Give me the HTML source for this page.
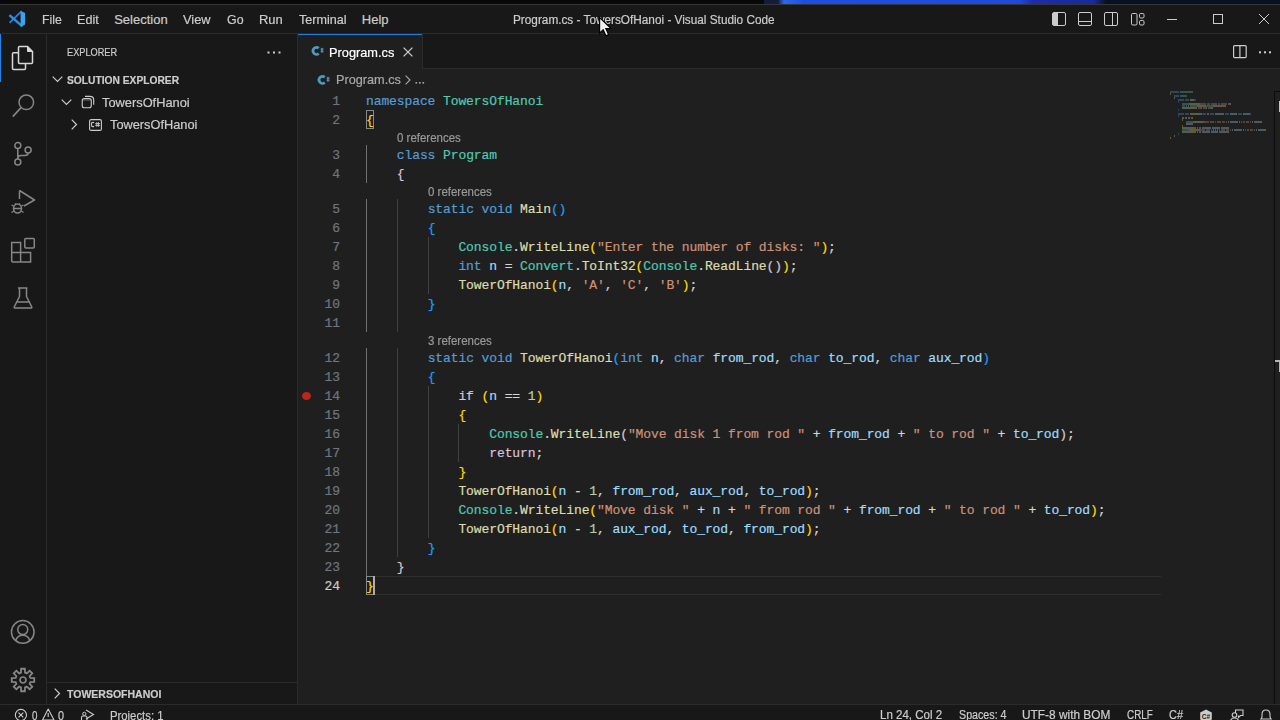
<!DOCTYPE html>
<html><head><meta charset="utf-8">
<style>
*{box-sizing:border-box}
html,body{margin:0;padding:0}
body{width:1280px;height:720px;overflow:hidden;position:relative;background:#181818;font-family:"Liberation Sans",sans-serif;color:#cccccc;-webkit-text-stroke:0.2px currentColor}
.a{position:absolute}
.tx{position:absolute;white-space:pre;line-height:20px;transform-origin:0 0}
.ln{position:absolute;left:300px;width:40px;text-align:right;font-family:"Liberation Mono",monospace;font-size:13px;color:#6e7681;line-height:19px}
.code{position:absolute;left:366px;font-family:"Liberation Mono",monospace;font-size:13.0px;letter-spacing:-0.100px;line-height:19px;white-space:pre;color:#d4d4d4}
.cl{position:absolute;font-size:12px;color:#999999;line-height:20px;white-space:pre;transform-origin:0 0;transform:scaleX(0.957)}
.k{color:#569cd6}.c{color:#dcc0dc}.t{color:#4ec9b0}.f{color:#dcdcaa}.v{color:#9cdcfe}.s{color:#ce9178}.n{color:#b5cea8}
.b1{color:#ffd700}.b2{color:#d8c4d8}.b3{color:#179fff}
.g{position:absolute;width:1px;background:#404040}
.ga{background:#707070}
svg{position:absolute;overflow:visible}
</style></head><body>
<!-- desktop strip -->
<div class="a" style="left:0;top:0;width:1280px;height:4px;background:#080808"></div>
<div class="a" style="left:764px;top:0;width:516px;height:4px;background:linear-gradient(90deg,#161d3c 0px,#161d3c 14px,#2a6ae8 20px,#1d4fdf 40px,#1f4ad8 256px,#1b2ea8 268px,#1a2a9a 330px,#07111f 342px,#07111f 516px)"></div>
<!-- window top border -->
<div class="a" style="left:0;top:4px;width:1280px;height:1px;background:#363636"></div>
<!-- title bar border -->
<div class="a" style="left:0;top:33px;width:1280px;height:1px;background:#2b2b2b"></div>

<!-- VS Code logo -->
<svg style="left:0;top:0" width="30" height="30" viewBox="0 0 30 30">
<path d="M10.2 22.1 L21 11.8" stroke="#2a7fd6" stroke-width="1.9" stroke-linecap="square"/>
<path d="M10.3 15.9 L21.5 25.6" stroke="#2b8fe6" stroke-width="2.5" stroke-linecap="square"/>
<path d="M20.6 10.9 L25.1 13.1 V24.6 L20.6 26.7 Z" fill="#3aa3f2"/>
</svg>
<div class="tx" style="left:41.7px;top:10.1px;font-size:13px;transform:scaleX(0.945)">File</div>
<div class="tx" style="left:76.9px;top:10.1px;font-size:13px;transform:scaleX(0.968)">Edit</div>
<div class="tx" style="left:114.2px;top:10.1px;font-size:13px">Selection</div>
<div class="tx" style="left:183.4px;top:10.1px;font-size:13px;transform:scaleX(0.986)">View</div>
<div class="tx" style="left:227px;top:10.1px;font-size:13px;transform:scaleX(0.953)">Go</div>
<div class="tx" style="left:258.7px;top:10.1px;font-size:13px;transform:scaleX(0.995)">Run</div>
<div class="tx" style="left:298.5px;top:10.1px;font-size:13px;transform:scaleX(0.967)">Terminal</div>
<div class="tx" style="left:361.8px;top:10.1px;font-size:13px">Help</div>
<div class="tx" style="left:512.7px;top:9.8px;font-size:12.5px;transform:scaleX(0.943)">Program.cs - TowersOfHanoi - Visual Studio Code</div>
<!-- mouse cursor -->
<svg style="left:599.2px;top:17.4px" width="15" height="20.7" viewBox="0 0 13 18">
<path d="M0.5 0.5 L0.5 14 L3.6 11 L6 16.3 L8.3 15.3 L5.9 10.1 L10.5 10 Z" fill="#f0f0f0" stroke="#000" stroke-width="1"/>
</svg>

<!-- layout icons -->
<svg style="left:1052px;top:12px" width="14" height="14" viewBox="0 0 14 14">
<rect x="0.5" y="0.5" width="13" height="13" rx="1.5" fill="none" stroke="#cccccc" stroke-width="1"/>
<rect x="1" y="1" width="5" height="12" fill="#cccccc"/>
</svg>
<svg style="left:1078px;top:12px" width="14" height="14" viewBox="0 0 14 14">
<rect x="0.5" y="0.5" width="13" height="13" rx="1.5" fill="none" stroke="#cccccc" stroke-width="1"/>
<line x1="0.5" y1="9.5" x2="13.5" y2="9.5" stroke="#cccccc" stroke-width="1"/>
</svg>
<svg style="left:1104px;top:12px" width="14" height="14" viewBox="0 0 14 14">
<rect x="0.5" y="0.5" width="13" height="13" rx="1.5" fill="none" stroke="#cccccc" stroke-width="1"/>
<line x1="8.5" y1="0.5" x2="8.5" y2="13.5" stroke="#cccccc" stroke-width="1"/>
</svg>
<svg style="left:1131px;top:12px" width="14" height="14" viewBox="0 0 14 14">
<rect x="0.5" y="1.5" width="5.5" height="11.5" rx="1.2" fill="none" stroke="#cccccc" stroke-width="1"/>
<rect x="8.5" y="1.5" width="4.5" height="4.5" rx="1.2" fill="none" stroke="#cccccc" stroke-width="1"/>
<rect x="8.5" y="8.5" width="4.5" height="4.5" rx="1.2" fill="none" stroke="#cccccc" stroke-width="1"/>
</svg>
<!-- window controls -->
<div class="a" style="left:1167px;top:19px;width:10px;height:1px;background:#cccccc"></div>
<div class="a" style="left:1213px;top:14px;width:10px;height:10px;border:1px solid #cccccc"></div>
<svg style="left:1258px;top:13px" width="12" height="12" viewBox="0 0 12 12">
<path d="M1 1 L11 11 M11 1 L1 11" stroke="#cccccc" stroke-width="1"/>
</svg>

<!-- activity bar -->
<div class="a" style="left:46px;top:34px;width:1px;height:670px;background:#2b2b2b"></div>
<div class="a" style="left:0;top:34px;width:1px;height:48px;background:#1a86f0"></div>
<svg style="left:11px;top:45px" width="24" height="26" viewBox="0 0 24 26">
<path d="M7.5 7.7 H2.5 Q1.5 7.7 1.5 8.7 V23.5 Q1.5 24.5 2.5 24.5 H13.5 Q14.5 24.5 14.5 23.5 V18.5" fill="none" stroke="#d7d7d7" stroke-width="1.5"/>
<path d="M8.5 1.5 H16.5 L21.5 6.5 V17.5 Q21.5 18.5 20.5 18.5 H8.5 Q7.5 18.5 7.5 17.5 V2.5 Q7.5 1.5 8.5 1.5 Z" fill="none" stroke="#d7d7d7" stroke-width="1.5"/>
<path d="M16.5 1.5 V6.5 H21.5 Z" fill="#d7d7d7" stroke="#d7d7d7" stroke-width="1"/>
</svg>
<svg style="left:11px;top:93px" width="25" height="26" viewBox="0 0 25 26">
<circle cx="15.3" cy="9.3" r="7.3" fill="none" stroke="#868686" stroke-width="1.5"/>
<path d="M10 14.6 L1.8 23.6" stroke="#868686" stroke-width="1.6"/>
</svg>
<svg style="left:11px;top:139px" width="24" height="28" viewBox="0 0 24 28">
<circle cx="6.8" cy="6.6" r="3" fill="none" stroke="#868686" stroke-width="1.5"/>
<circle cx="17.1" cy="11" r="3" fill="none" stroke="#868686" stroke-width="1.5"/>
<circle cx="6.8" cy="22.9" r="3" fill="none" stroke="#868686" stroke-width="1.5"/>
<path d="M6.8 9.6 V19.9 M17.1 14 Q17.1 16.5 14 16.5 H10 Q6.8 16.5 6.8 19" fill="none" stroke="#868686" stroke-width="1.5"/>
</svg>
<svg style="left:10px;top:189px" width="26" height="26" viewBox="0 0 26 26">
<path d="M9.5 1.5 L24.5 11 L14 17" fill="none" stroke="#868686" stroke-width="1.5" stroke-linejoin="round"/>
<path d="M9.5 1.5 V10" fill="none" stroke="#868686" stroke-width="1.5"/>
<ellipse cx="7.5" cy="19.5" rx="4" ry="4.5" fill="none" stroke="#868686" stroke-width="1.5"/>
<path d="M3.5 19.5 H11.5 M1.5 16 L3.5 17 M13.5 16 L11.5 17 M1.5 23.5 L3.8 22 M13.5 23.5 L11.2 22 M5 14.5 L6 15.5 M10 14.5 L9 15.5" stroke="#868686" stroke-width="1.3"/>
</svg>
<svg style="left:10px;top:237px" width="26" height="26" viewBox="0 0 26 26">
<path d="M1.7 5.5 H10.6 V15.5 H20.6 V24.9 H2.7 Q1.7 24.9 1.7 23.9 Z M1.7 15.5 H10.6 V24.9" fill="none" stroke="#868686" stroke-width="1.5"/>
<rect x="14.8" y="1.5" width="9.5" height="9.5" rx="1" fill="none" stroke="#868686" stroke-width="1.5"/>
</svg>
<svg style="left:12px;top:286px" width="22" height="24" viewBox="0 0 22 24">
<path d="M6 2 H15.5 M7.5 2 V10.5 L2.2 21 Q2 22 3 22 H19 Q20 22 19.8 21 L14.5 10.5 V2 M4.5 16 H17.5" fill="none" stroke="#868686" stroke-width="1.5" stroke-linejoin="round"/>
</svg>
<svg style="left:10px;top:619px" width="26" height="26" viewBox="0 0 26 26">
<circle cx="12.75" cy="12.9" r="11.3" fill="none" stroke="#868686" stroke-width="1.5"/>
<circle cx="12.75" cy="10.6" r="5" fill="none" stroke="#868686" stroke-width="1.5"/>
<path d="M5.6 21.4 Q7.5 16.2 12.75 16.2 Q18 16.2 19.9 21.4" fill="none" stroke="#868686" stroke-width="1.5"/>
</svg>
<svg style="left:10px;top:667px" width="26" height="26" viewBox="-13 -13 26 26">
<path d="M-2.03 -7.32 L-1.87 -11.25 L1.87 -11.25 L2.03 -7.32 L3.75 -6.61 L6.63 -9.28 L9.28 -6.63 L6.61 -3.75 L7.32 -2.03 L11.25 -1.87 L11.25 1.87 L7.32 2.03 L6.61 3.75 L9.28 6.63 L6.63 9.28 L3.75 6.61 L2.03 7.32 L1.87 11.25 L-1.87 11.25 L-2.03 7.32 L-3.75 6.61 L-6.63 9.28 L-9.28 6.63 L-6.61 3.75 L-7.32 2.03 L-11.25 1.87 L-11.25 -1.87 L-7.32 -2.03 L-6.61 -3.75 L-9.28 -6.63 L-6.63 -9.28 L-3.75 -6.61 Z" fill="none" stroke="#868686" stroke-width="1.8" stroke-linejoin="miter"/>
<circle cx="0" cy="0" r="3" fill="none" stroke="#868686" stroke-width="1.7"/>
</svg>

<!-- sidebar -->
<div class="a" style="left:297px;top:34px;width:1px;height:670px;background:#2b2b2b"></div>
<div class="tx" style="left:66.8px;top:41.7px;font-size:11px;transform:scaleX(0.836)">EXPLORER</div>
<svg style="left:267px;top:51px" width="14" height="3" viewBox="0 0 14 3">
<rect x="0.5" y="0.5" width="2" height="2" fill="#cccccc"/><rect x="6" y="0.5" width="2" height="2" fill="#cccccc"/><rect x="11.5" y="0.5" width="2" height="2" fill="#cccccc"/>
</svg>
<svg style="left:52px;top:76px" width="11" height="7" viewBox="0 0 11 7">
<path d="M0.7 0.7 L5.5 5.5 L10.3 0.7" fill="none" stroke="#cccccc" stroke-width="1.2"/>
</svg>
<div class="tx" style="left:67.1px;top:69.8px;font-size:11px;font-weight:bold;transform:scaleX(0.931)">SOLUTION EXPLORER</div>
<svg style="left:61px;top:99px" width="11" height="7" viewBox="0 0 11 7">
<path d="M0.7 0.7 L5.5 5.5 L10.3 0.7" fill="none" stroke="#cccccc" stroke-width="1.2"/>
</svg>
<svg style="left:81px;top:95px" width="14" height="14" viewBox="0 0 14 14">
<rect x="1.25" y="3.45" width="9" height="9.3" rx="2" fill="none" stroke="#cccccc" stroke-width="1.1"/>
<path d="M1.6 4.9 H9.9" stroke="#cccccc" stroke-width="0.6"/>
<path d="M4 1.4 H9 Q12.7 1.4 12.7 5 V9.8" fill="none" stroke="#cccccc" stroke-width="1.1"/>
</svg>
<div class="tx" style="left:102.2px;top:92.9px;font-size:13px;transform:scaleX(0.987)">TowersOfHanoi</div>
<svg style="left:71px;top:119px" width="7" height="11" viewBox="0 0 7 11">
<path d="M0.7 0.7 L5.5 5.5 L0.7 10.3" fill="none" stroke="#cccccc" stroke-width="1.2"/>
</svg>
<svg style="left:89px;top:119px" width="13" height="12" viewBox="0 0 13 12">
<rect x="0.6" y="0.6" width="11.8" height="10.8" rx="1.5" fill="none" stroke="#cccccc" stroke-width="1.1"/>
<path d="M5 3.9 Q4.6 3.3 3.7 3.3 Q2.5 3.3 2.5 5.5 Q2.5 7.7 3.7 7.7 Q4.6 7.7 5 7.1" fill="none" stroke="#cccccc" stroke-width="1.1"/>
<path d="M6.2 4.6 H11 M6.2 6.4 H11 M7.8 3.2 V7.8 M9.5 3.2 V7.8" stroke="#cccccc" stroke-width="0.9"/>
</svg>
<div class="tx" style="left:110.4px;top:114.5px;font-size:13px;transform:scaleX(0.984)">TowersOfHanoi</div>
<div class="a" style="left:47px;top:682px;width:250px;height:1px;background:#2b2b2b"></div>
<svg style="left:54px;top:688px" width="7" height="11" viewBox="0 0 7 11">
<path d="M0.7 0.7 L5.5 5.5 L0.7 10.3" fill="none" stroke="#cccccc" stroke-width="1.2"/>
</svg>
<div class="tx" style="left:67.2px;top:683.8px;font-size:11px;font-weight:bold;transform:scaleX(0.955)">TOWERSOFHANOI</div>

<!-- tabs -->
<div class="a" style="left:298px;top:68px;width:982px;height:1px;background:#2b2b2b"></div>
<div class="a" style="left:298px;top:34px;width:124px;height:35px;background:#1f1f1f;border-top:1px solid #1a7fe0"></div>
<div class="a" style="left:422px;top:34px;width:1px;height:34px;background:#2b2b2b"></div>
<svg style="left:311px;top:45px" width="13" height="11" viewBox="0 0 13 11">
<path d="M7.7 3.2 A3.4 3.6 0 1 0 7.7 8.6" fill="none" stroke="#519aba" stroke-width="2.7"/>
<path d="M9.5 4.2 H12.6 M9.5 6.3 H12.6 M10.5 2.9 V7.7 M11.7 2.9 V7.7" stroke="#519aba" stroke-width="0.8"/>
</svg>
<div class="tx" style="left:329px;top:42.8px;font-size:13px;color:#ffffff;transform:scaleX(0.983)">Program.cs</div>
<svg style="left:403px;top:47px" width="10" height="10" viewBox="0 0 10 10">
<path d="M0.6 0.6 L9.4 9.4 M9.4 0.6 L0.6 9.4" stroke="#cccccc" stroke-width="1.3"/>
</svg>
<svg style="left:1233px;top:45px" width="14" height="13" viewBox="0 0 14 13">
<rect x="0.6" y="0.6" width="12.6" height="12" rx="1" fill="none" stroke="#cccccc" stroke-width="1.2"/>
<line x1="6.9" y1="0.6" x2="6.9" y2="12.6" stroke="#cccccc" stroke-width="1.2"/>
</svg>
<svg style="left:1258px;top:51px" width="14" height="3" viewBox="0 0 14 3">
<rect x="1" y="0.3" width="2" height="2" fill="#cccccc"/><rect x="6" y="0.3" width="2" height="2" fill="#cccccc"/><rect x="11" y="0.3" width="2" height="2" fill="#cccccc"/>
</svg>

<!-- editor -->
<div class="a" style="left:298px;top:69px;width:982px;height:635px;background:#1f1f1f"></div>
<svg style="left:317px;top:74px" width="13" height="11" viewBox="0 0 13 11">
<path d="M7.7 3.2 A3.4 3.6 0 1 0 7.7 8.6" fill="none" stroke="#519aba" stroke-width="2.7"/>
<path d="M9.5 4.2 H12.6 M9.5 6.3 H12.6 M10.5 2.9 V7.7 M11.7 2.9 V7.7" stroke="#519aba" stroke-width="0.8"/>
</svg>
<div class="tx" style="left:335.5px;top:69.7px;font-size:13px;color:#a9a9a9;transform:scaleX(0.977)">Program.cs</div>
<svg style="left:405px;top:75px" width="6" height="10" viewBox="0 0 6 10">
<path d="M0.6 0.6 L5 5 L0.6 9.4" fill="none" stroke="#a9a9a9" stroke-width="1.1"/>
</svg>
<svg style="left:415px;top:82px" width="10" height="2" viewBox="0 0 10 2">
<rect x="0.5" y="0" width="1.6" height="1.6" fill="#a9a9a9"/><rect x="4" y="0" width="1.6" height="1.6" fill="#a9a9a9"/><rect x="7.5" y="0" width="1.6" height="1.6" fill="#a9a9a9"/>
</svg>
<div class="ln" style="top:92px;color:#6e7681">1</div><div class="ln" style="top:111px;color:#6e7681">2</div><div class="ln" style="top:146px;color:#6e7681">3</div><div class="ln" style="top:165px;color:#6e7681">4</div><div class="ln" style="top:200px;color:#6e7681">5</div><div class="ln" style="top:219px;color:#6e7681">6</div><div class="ln" style="top:238px;color:#6e7681">7</div><div class="ln" style="top:257px;color:#6e7681">8</div><div class="ln" style="top:276px;color:#6e7681">9</div><div class="ln" style="top:295px;color:#6e7681">10</div><div class="ln" style="top:314px;color:#6e7681">11</div><div class="ln" style="top:349px;color:#6e7681">12</div><div class="ln" style="top:368px;color:#6e7681">13</div><div class="ln" style="top:387px;color:#6e7681">14</div><div class="ln" style="top:406px;color:#6e7681">15</div><div class="ln" style="top:425px;color:#6e7681">16</div><div class="ln" style="top:444px;color:#6e7681">17</div><div class="ln" style="top:463px;color:#6e7681">18</div><div class="ln" style="top:482px;color:#6e7681">19</div><div class="ln" style="top:501px;color:#6e7681">20</div><div class="ln" style="top:520px;color:#6e7681">21</div><div class="ln" style="top:539px;color:#6e7681">22</div><div class="ln" style="top:558px;color:#6e7681">23</div><div class="ln" style="top:577px;color:#cccccc">24</div><div class="g ga" style="left:366px;top:145px;height:38px"></div><div class="g ga" style="left:366px;top:199px;height:133px"></div><div class="g ga" style="left:366px;top:348px;height:228px"></div><div class="g" style="left:397px;top:199px;height:133px"></div><div class="g" style="left:397px;top:348px;height:209px"></div><div class="g" style="left:428px;top:237px;height:57px"></div><div class="g" style="left:428px;top:386px;height:152px"></div><div class="g" style="left:458px;top:424px;height:38px"></div><div class="cl" style="left:396.9px;top:127.9px">0 references</div><div class="cl" style="left:427.7px;top:181.9px">0 references</div><div class="cl" style="left:427.7px;top:330.9px">3 references</div><div class="a" style="left:366px;top:576px;width:795px;height:19px;border-top:1px solid #2e2e2e;border-bottom:1px solid #2e2e2e"></div><div class="a" style="left:366px;top:110px;width:8px;height:19px;border:1px solid #888888"></div><div class="a" style="left:366px;top:576px;width:8px;height:19px;border:1px solid #888888"></div><div class="a" style="left:373px;top:576px;width:2px;height:19px;background:#aeafad"></div><div class="code" style="top:92px"><span class="k">namespace</span> <span class="t">TowersOfHanoi</span></div><div class="code" style="top:111px"><span class="b1">{</span></div><div class="code" style="top:146px">    <span class="k">class</span> <span class="t">Program</span></div><div class="code" style="top:165px">    <span class="b2">{</span></div><div class="code" style="top:200px">        <span class="k">static</span> <span class="k">void</span> <span class="f">Main</span><span class="b3">()</span></div><div class="code" style="top:219px">        <span class="b3">{</span></div><div class="code" style="top:238px">            <span class="t">Console</span>.<span class="f">WriteLine</span><span class="b1">(</span><span class="s">&quot;Enter the number of disks: &quot;</span><span class="b1">)</span>;</div><div class="code" style="top:257px">            <span class="k">int</span> <span class="v">n</span> = <span class="t">Convert</span>.<span class="f">ToInt32</span><span class="b1">(</span><span class="t">Console</span>.<span class="f">ReadLine</span><span class="b2">()</span><span class="b1">)</span>;</div><div class="code" style="top:276px">            <span class="f">TowerOfHanoi</span><span class="b1">(</span><span class="v">n</span>, <span class="s">&#x27;A&#x27;</span>, <span class="s">&#x27;C&#x27;</span>, <span class="s">&#x27;B&#x27;</span><span class="b1">)</span>;</div><div class="code" style="top:295px">        <span class="b3">}</span></div><div class="code" style="top:314px"></div><div class="code" style="top:349px">        <span class="k">static</span> <span class="k">void</span> <span class="f">TowerOfHanoi</span><span class="b3">(</span><span class="k">int</span> <span class="v">n</span>, <span class="k">char</span> <span class="v">from_rod</span>, <span class="k">char</span> <span class="v">to_rod</span>, <span class="k">char</span> <span class="v">aux_rod</span><span class="b3">)</span></div><div class="code" style="top:368px">        <span class="b3">{</span></div><div class="code" style="top:387px">            <span class="c">if</span> <span class="b1">(</span><span class="v">n</span> == <span class="n">1</span><span class="b1">)</span></div><div class="code" style="top:406px">            <span class="b1">{</span></div><div class="code" style="top:425px">                <span class="t">Console</span>.<span class="f">WriteLine</span><span class="b2">(</span><span class="s">&quot;Move disk 1 from rod &quot;</span> + <span class="v">from_rod</span> + <span class="s">&quot; to rod &quot;</span> + <span class="v">to_rod</span><span class="b2">)</span>;</div><div class="code" style="top:444px">                <span class="c">return</span>;</div><div class="code" style="top:463px">            <span class="b1">}</span></div><div class="code" style="top:482px">            <span class="f">TowerOfHanoi</span><span class="b1">(</span><span class="v">n</span> - <span class="n">1</span>, <span class="v">from_rod</span>, <span class="v">aux_rod</span>, <span class="v">to_rod</span><span class="b1">)</span>;</div><div class="code" style="top:501px">            <span class="t">Console</span>.<span class="f">WriteLine</span><span class="b1">(</span><span class="s">&quot;Move disk &quot;</span> + <span class="v">n</span> + <span class="s">&quot; from rod &quot;</span> + <span class="v">from_rod</span> + <span class="s">&quot; to rod &quot;</span> + <span class="v">to_rod</span><span class="b1">)</span>;</div><div class="code" style="top:520px">            <span class="f">TowerOfHanoi</span><span class="b1">(</span><span class="v">n</span> - <span class="n">1</span>, <span class="v">aux_rod</span>, <span class="v">to_rod</span>, <span class="v">from_rod</span><span class="b1">)</span>;</div><div class="code" style="top:539px">        <span class="b3">}</span></div><div class="code" style="top:558px">    <span class="b2">}</span></div><div class="code" style="top:577px"><span class="b1">}</span></div><div class="a" style="left:302px;top:392px;width:9px;height:8px;border-radius:50%;background:#bb261b"></div><div class="a" style="left:1170px;top:91px;width:100px;height:50px;opacity:.32;filter:blur(0.3px)"><div class="a" style="left:0px;top:0px;width:9px;height:2px;background:#569cd6"></div><div class="a" style="left:10px;top:0px;width:13px;height:2px;background:#4ec9b0"></div><div class="a" style="left:0px;top:2px;width:1px;height:2px;background:#ffd700"></div><div class="a" style="left:4px;top:4px;width:5px;height:2px;background:#569cd6"></div><div class="a" style="left:10px;top:4px;width:7px;height:2px;background:#4ec9b0"></div><div class="a" style="left:4px;top:6px;width:1px;height:2px;background:#d8c4d8"></div><div class="a" style="left:8px;top:8px;width:6px;height:2px;background:#569cd6"></div><div class="a" style="left:15px;top:8px;width:4px;height:2px;background:#569cd6"></div><div class="a" style="left:20px;top:8px;width:4px;height:2px;background:#dcdcaa"></div><div class="a" style="left:24px;top:8px;width:2px;height:2px;background:#179fff"></div><div class="a" style="left:8px;top:10px;width:1px;height:2px;background:#179fff"></div><div class="a" style="left:12px;top:12px;width:7px;height:2px;background:#4ec9b0"></div><div class="a" style="left:19px;top:12px;width:1px;height:2px;background:#d4d4d4"></div><div class="a" style="left:20px;top:12px;width:9px;height:2px;background:#dcdcaa"></div><div class="a" style="left:29px;top:12px;width:1px;height:2px;background:#ffd700"></div><div class="a" style="left:30px;top:12px;width:6px;height:2px;background:#ce9178"></div><div class="a" style="left:37px;top:12px;width:3px;height:2px;background:#ce9178"></div><div class="a" style="left:41px;top:12px;width:6px;height:2px;background:#ce9178"></div><div class="a" style="left:48px;top:12px;width:2px;height:2px;background:#ce9178"></div><div class="a" style="left:51px;top:12px;width:6px;height:2px;background:#ce9178"></div><div class="a" style="left:58px;top:12px;width:1px;height:2px;background:#ce9178"></div><div class="a" style="left:59px;top:12px;width:1px;height:2px;background:#ffd700"></div><div class="a" style="left:60px;top:12px;width:1px;height:2px;background:#d4d4d4"></div><div class="a" style="left:12px;top:14px;width:3px;height:2px;background:#569cd6"></div><div class="a" style="left:16px;top:14px;width:1px;height:2px;background:#9cdcfe"></div><div class="a" style="left:18px;top:14px;width:1px;height:2px;background:#d4d4d4"></div><div class="a" style="left:20px;top:14px;width:7px;height:2px;background:#4ec9b0"></div><div class="a" style="left:27px;top:14px;width:1px;height:2px;background:#d4d4d4"></div><div class="a" style="left:28px;top:14px;width:7px;height:2px;background:#dcdcaa"></div><div class="a" style="left:35px;top:14px;width:1px;height:2px;background:#ffd700"></div><div class="a" style="left:36px;top:14px;width:7px;height:2px;background:#4ec9b0"></div><div class="a" style="left:43px;top:14px;width:1px;height:2px;background:#d4d4d4"></div><div class="a" style="left:44px;top:14px;width:8px;height:2px;background:#dcdcaa"></div><div class="a" style="left:52px;top:14px;width:2px;height:2px;background:#d8c4d8"></div><div class="a" style="left:54px;top:14px;width:1px;height:2px;background:#ffd700"></div><div class="a" style="left:55px;top:14px;width:1px;height:2px;background:#d4d4d4"></div><div class="a" style="left:12px;top:16px;width:12px;height:2px;background:#dcdcaa"></div><div class="a" style="left:24px;top:16px;width:1px;height:2px;background:#ffd700"></div><div class="a" style="left:25px;top:16px;width:1px;height:2px;background:#9cdcfe"></div><div class="a" style="left:26px;top:16px;width:1px;height:2px;background:#d4d4d4"></div><div class="a" style="left:28px;top:16px;width:3px;height:2px;background:#ce9178"></div><div class="a" style="left:31px;top:16px;width:1px;height:2px;background:#d4d4d4"></div><div class="a" style="left:33px;top:16px;width:3px;height:2px;background:#ce9178"></div><div class="a" style="left:36px;top:16px;width:1px;height:2px;background:#d4d4d4"></div><div class="a" style="left:38px;top:16px;width:3px;height:2px;background:#ce9178"></div><div class="a" style="left:41px;top:16px;width:1px;height:2px;background:#ffd700"></div><div class="a" style="left:42px;top:16px;width:1px;height:2px;background:#d4d4d4"></div><div class="a" style="left:8px;top:18px;width:1px;height:2px;background:#179fff"></div><div class="a" style="left:8px;top:22px;width:6px;height:2px;background:#569cd6"></div><div class="a" style="left:15px;top:22px;width:4px;height:2px;background:#569cd6"></div><div class="a" style="left:20px;top:22px;width:12px;height:2px;background:#dcdcaa"></div><div class="a" style="left:32px;top:22px;width:1px;height:2px;background:#179fff"></div><div class="a" style="left:33px;top:22px;width:3px;height:2px;background:#569cd6"></div><div class="a" style="left:37px;top:22px;width:1px;height:2px;background:#9cdcfe"></div><div class="a" style="left:38px;top:22px;width:1px;height:2px;background:#d4d4d4"></div><div class="a" style="left:40px;top:22px;width:4px;height:2px;background:#569cd6"></div><div class="a" style="left:45px;top:22px;width:8px;height:2px;background:#9cdcfe"></div><div class="a" style="left:53px;top:22px;width:1px;height:2px;background:#d4d4d4"></div><div class="a" style="left:55px;top:22px;width:4px;height:2px;background:#569cd6"></div><div class="a" style="left:60px;top:22px;width:6px;height:2px;background:#9cdcfe"></div><div class="a" style="left:66px;top:22px;width:1px;height:2px;background:#d4d4d4"></div><div class="a" style="left:68px;top:22px;width:4px;height:2px;background:#569cd6"></div><div class="a" style="left:73px;top:22px;width:7px;height:2px;background:#9cdcfe"></div><div class="a" style="left:80px;top:22px;width:1px;height:2px;background:#179fff"></div><div class="a" style="left:8px;top:24px;width:1px;height:2px;background:#179fff"></div><div class="a" style="left:12px;top:26px;width:2px;height:2px;background:#dcc0dc"></div><div class="a" style="left:15px;top:26px;width:1px;height:2px;background:#ffd700"></div><div class="a" style="left:16px;top:26px;width:1px;height:2px;background:#9cdcfe"></div><div class="a" style="left:18px;top:26px;width:2px;height:2px;background:#d4d4d4"></div><div class="a" style="left:21px;top:26px;width:1px;height:2px;background:#b5cea8"></div><div class="a" style="left:22px;top:26px;width:1px;height:2px;background:#ffd700"></div><div class="a" style="left:12px;top:28px;width:1px;height:2px;background:#ffd700"></div><div class="a" style="left:16px;top:30px;width:7px;height:2px;background:#4ec9b0"></div><div class="a" style="left:23px;top:30px;width:1px;height:2px;background:#d4d4d4"></div><div class="a" style="left:24px;top:30px;width:9px;height:2px;background:#dcdcaa"></div><div class="a" style="left:33px;top:30px;width:1px;height:2px;background:#d8c4d8"></div><div class="a" style="left:34px;top:30px;width:5px;height:2px;background:#ce9178"></div><div class="a" style="left:40px;top:30px;width:4px;height:2px;background:#ce9178"></div><div class="a" style="left:45px;top:30px;width:1px;height:2px;background:#ce9178"></div><div class="a" style="left:47px;top:30px;width:4px;height:2px;background:#ce9178"></div><div class="a" style="left:52px;top:30px;width:3px;height:2px;background:#ce9178"></div><div class="a" style="left:56px;top:30px;width:1px;height:2px;background:#ce9178"></div><div class="a" style="left:58px;top:30px;width:1px;height:2px;background:#d4d4d4"></div><div class="a" style="left:60px;top:30px;width:8px;height:2px;background:#9cdcfe"></div><div class="a" style="left:69px;top:30px;width:1px;height:2px;background:#d4d4d4"></div><div class="a" style="left:71px;top:30px;width:1px;height:2px;background:#ce9178"></div><div class="a" style="left:73px;top:30px;width:2px;height:2px;background:#ce9178"></div><div class="a" style="left:76px;top:30px;width:3px;height:2px;background:#ce9178"></div><div class="a" style="left:80px;top:30px;width:1px;height:2px;background:#ce9178"></div><div class="a" style="left:82px;top:30px;width:1px;height:2px;background:#d4d4d4"></div><div class="a" style="left:84px;top:30px;width:6px;height:2px;background:#9cdcfe"></div><div class="a" style="left:90px;top:30px;width:1px;height:2px;background:#d8c4d8"></div><div class="a" style="left:91px;top:30px;width:1px;height:2px;background:#d4d4d4"></div><div class="a" style="left:16px;top:32px;width:6px;height:2px;background:#dcc0dc"></div><div class="a" style="left:22px;top:32px;width:1px;height:2px;background:#d4d4d4"></div><div class="a" style="left:12px;top:34px;width:1px;height:2px;background:#ffd700"></div><div class="a" style="left:12px;top:36px;width:12px;height:2px;background:#dcdcaa"></div><div class="a" style="left:24px;top:36px;width:1px;height:2px;background:#ffd700"></div><div class="a" style="left:25px;top:36px;width:1px;height:2px;background:#9cdcfe"></div><div class="a" style="left:27px;top:36px;width:1px;height:2px;background:#d4d4d4"></div><div class="a" style="left:29px;top:36px;width:1px;height:2px;background:#b5cea8"></div><div class="a" style="left:30px;top:36px;width:1px;height:2px;background:#d4d4d4"></div><div class="a" style="left:32px;top:36px;width:8px;height:2px;background:#9cdcfe"></div><div class="a" style="left:40px;top:36px;width:1px;height:2px;background:#d4d4d4"></div><div class="a" style="left:42px;top:36px;width:7px;height:2px;background:#9cdcfe"></div><div class="a" style="left:49px;top:36px;width:1px;height:2px;background:#d4d4d4"></div><div class="a" style="left:51px;top:36px;width:6px;height:2px;background:#9cdcfe"></div><div class="a" style="left:57px;top:36px;width:1px;height:2px;background:#ffd700"></div><div class="a" style="left:58px;top:36px;width:1px;height:2px;background:#d4d4d4"></div><div class="a" style="left:12px;top:38px;width:7px;height:2px;background:#4ec9b0"></div><div class="a" style="left:19px;top:38px;width:1px;height:2px;background:#d4d4d4"></div><div class="a" style="left:20px;top:38px;width:9px;height:2px;background:#dcdcaa"></div><div class="a" style="left:29px;top:38px;width:1px;height:2px;background:#ffd700"></div><div class="a" style="left:30px;top:38px;width:5px;height:2px;background:#ce9178"></div><div class="a" style="left:36px;top:38px;width:4px;height:2px;background:#ce9178"></div><div class="a" style="left:41px;top:38px;width:1px;height:2px;background:#ce9178"></div><div class="a" style="left:43px;top:38px;width:1px;height:2px;background:#d4d4d4"></div><div class="a" style="left:45px;top:38px;width:1px;height:2px;background:#9cdcfe"></div><div class="a" style="left:47px;top:38px;width:1px;height:2px;background:#d4d4d4"></div><div class="a" style="left:49px;top:38px;width:1px;height:2px;background:#ce9178"></div><div class="a" style="left:51px;top:38px;width:4px;height:2px;background:#ce9178"></div><div class="a" style="left:56px;top:38px;width:3px;height:2px;background:#ce9178"></div><div class="a" style="left:60px;top:38px;width:1px;height:2px;background:#ce9178"></div><div class="a" style="left:62px;top:38px;width:1px;height:2px;background:#d4d4d4"></div><div class="a" style="left:64px;top:38px;width:8px;height:2px;background:#9cdcfe"></div><div class="a" style="left:73px;top:38px;width:1px;height:2px;background:#d4d4d4"></div><div class="a" style="left:75px;top:38px;width:1px;height:2px;background:#ce9178"></div><div class="a" style="left:77px;top:38px;width:2px;height:2px;background:#ce9178"></div><div class="a" style="left:80px;top:38px;width:3px;height:2px;background:#ce9178"></div><div class="a" style="left:84px;top:38px;width:1px;height:2px;background:#ce9178"></div><div class="a" style="left:86px;top:38px;width:1px;height:2px;background:#d4d4d4"></div><div class="a" style="left:88px;top:38px;width:6px;height:2px;background:#9cdcfe"></div><div class="a" style="left:94px;top:38px;width:1px;height:2px;background:#ffd700"></div><div class="a" style="left:95px;top:38px;width:1px;height:2px;background:#d4d4d4"></div><div class="a" style="left:12px;top:40px;width:12px;height:2px;background:#dcdcaa"></div><div class="a" style="left:24px;top:40px;width:1px;height:2px;background:#ffd700"></div><div class="a" style="left:25px;top:40px;width:1px;height:2px;background:#9cdcfe"></div><div class="a" style="left:27px;top:40px;width:1px;height:2px;background:#d4d4d4"></div><div class="a" style="left:29px;top:40px;width:1px;height:2px;background:#b5cea8"></div><div class="a" style="left:30px;top:40px;width:1px;height:2px;background:#d4d4d4"></div><div class="a" style="left:32px;top:40px;width:7px;height:2px;background:#9cdcfe"></div><div class="a" style="left:39px;top:40px;width:1px;height:2px;background:#d4d4d4"></div><div class="a" style="left:41px;top:40px;width:6px;height:2px;background:#9cdcfe"></div><div class="a" style="left:47px;top:40px;width:1px;height:2px;background:#d4d4d4"></div><div class="a" style="left:49px;top:40px;width:8px;height:2px;background:#9cdcfe"></div><div class="a" style="left:57px;top:40px;width:1px;height:2px;background:#ffd700"></div><div class="a" style="left:58px;top:40px;width:1px;height:2px;background:#d4d4d4"></div><div class="a" style="left:8px;top:42px;width:1px;height:2px;background:#179fff"></div><div class="a" style="left:4px;top:44px;width:1px;height:2px;background:#d8c4d8"></div><div class="a" style="left:0px;top:46px;width:1px;height:2px;background:#ffd700"></div></div>
<!-- right edge -->
<div class="a" style="left:1274px;top:91px;width:1px;height:613px;background:#0c0c0c"></div>
<div class="a" style="left:1274px;top:91px;width:6px;height:1px;background:#0c0c0c"></div>
<div class="a" style="left:1279px;top:101px;width:1px;height:11px;background:#c4c4c4"></div>
<div class="a" style="left:1275px;top:360px;width:5px;height:2px;background:#b4b4b4"></div>
<div class="a" style="left:1279px;top:360px;width:1px;height:12px;background:#b4b4b4"></div>

<!-- status bar -->
<div class="a" style="left:0;top:704px;width:1280px;height:1px;background:#2b2b2b"></div>
<div class="a" style="left:0;top:705px;width:1280px;height:15px;background:#181818"></div>
<svg style="left:14px;top:708px" width="14" height="14" viewBox="0 0 14 14">
<circle cx="6.9" cy="7" r="5.6" fill="none" stroke="#cccccc" stroke-width="1.1"/>
<path d="M4.5 4.6 L9.3 9.4 M9.3 4.6 L4.5 9.4" stroke="#cccccc" stroke-width="1.1"/>
</svg>
<div class="tx" style="left:31.6px;top:706px;font-size:12px;transform:scaleX(0.814)">0</div>
<svg style="left:42px;top:708px" width="13" height="13" viewBox="0 0 13 13">
<path d="M6.2 1 L12 12 H0.5 Z" fill="none" stroke="#cccccc" stroke-width="1.1" stroke-linejoin="round"/>
<path d="M6.2 5 V9" stroke="#cccccc" stroke-width="1.1"/>
</svg>
<div class="tx" style="left:58.4px;top:706px;font-size:12px;transform:scaleX(0.9)">0</div>
<svg style="left:80px;top:709px" width="15" height="12" viewBox="0 0 15 12">
<path d="M6 1 L13.5 5.5 L6 10" fill="none" stroke="#cccccc" stroke-width="1.1"/>
<path d="M1.5 11 V8.5 Q1.5 7 3 7 H5.5 Q7 7 7 8.5 V11" fill="none" stroke="#cccccc" stroke-width="1.1"/>
<circle cx="4.3" cy="4.8" r="1.6" fill="none" stroke="#cccccc" stroke-width="1"/>
</svg>
<div class="tx" style="left:110.2px;top:705.5px;font-size:12px;transform:scaleX(0.943)">Projects: 1</div>
<div class="tx" style="left:879.7px;top:705.2px;font-size:12px;transform:scaleX(0.961)">Ln 24, Col 2</div>
<div class="tx" style="left:958.5px;top:705.2px;font-size:12px;transform:scaleX(0.891)">Spaces: 4</div>
<div class="tx" style="left:1022px;top:705.2px;font-size:12px;transform:scaleX(0.989)">UTF-8 with BOM</div>
<div class="tx" style="left:1126.8px;top:705.2px;font-size:12px;transform:scaleX(0.823)">CRLF</div>
<div class="tx" style="left:1168.6px;top:705.2px;font-size:12px;transform:scaleX(0.913)">C#</div>
<svg style="left:1199px;top:709px" width="14" height="14" viewBox="0 0 14 14">
<path d="M7 0.5 L12.8 3.6 V10.4 L7 13.5 L1.2 10.4 V3.6 Z" fill="#cccccc"/>
<text x="7" y="9.6" text-anchor="middle" font-family="Liberation Sans" font-weight="bold" font-size="6.5" fill="#181818">C#</text>
</svg>
<svg style="left:1230px;top:709px" width="14" height="12" viewBox="0 0 14 12">
<path d="M5.5 4 V1 H13 V6.5 H10.5 L8.5 8.5 V6.5" fill="none" stroke="#cccccc" stroke-width="1.1"/>
<circle cx="4.5" cy="6" r="2.3" fill="none" stroke="#cccccc" stroke-width="1.1"/>
<path d="M0.6 12 Q0.8 9 4.5 9 Q8.2 9 8.4 12" fill="none" stroke="#cccccc" stroke-width="1.1"/>
</svg>
<svg style="left:1260px;top:709px" width="12" height="12" viewBox="0 0 12 12">
<path d="M1 10 Q2 9 2 7 V5.5 Q2 1 6 1 Q10 1 10 5.5 V7 Q10 9 11 10 Z" fill="none" stroke="#cccccc" stroke-width="1.1"/>
</svg>
</body></html>
